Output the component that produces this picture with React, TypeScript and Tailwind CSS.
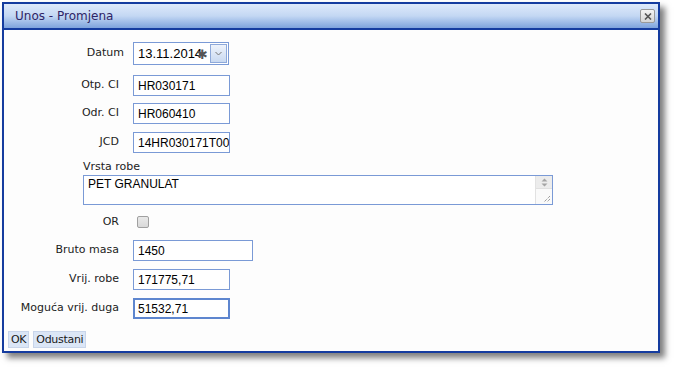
import React from "react";

const Label = ({ children, className = "" }: { children: React.ReactNode; className?: string }) => (
  <div className={"w-[115px] text-right text-[11px] text-[#222] " + className}>{children}</div>
);

const TextInput = ({ value, w = "w-[97px]", focus = false }: { value: string; w?: string; focus?: boolean }) => (
  <div
    className={
      "h-[21px] ml-[14px] bg-white overflow-hidden whitespace-nowrap flex items-center font-['Liberation_Sans',Arial,sans-serif] text-[12px] text-black " +
      w +
      (focus ? " border-2 border-[#5e86cf] pl-[3px]" : " border border-[#7a9ad6] pl-[4px]")
    }
  >
    {value}
  </div>
);

const App = () => {
  return (
    <div className="w-[674px] h-[367px] bg-white pt-[2px] pl-[2px] font-['DejaVu_Sans',Verdana,sans-serif]">
      <div className="w-[658px] h-[351px] border-2 border-[#153c9f] bg-[#fdfdfd] shadow-[5px_5px_6px_rgba(0,0,0,0.5)] flex flex-col">
        {/* title */}
        <div className="h-[26px] shrink-0 border-b-2 border-[#153c9f] bg-gradient-to-b from-[#dfeafa] via-[#c3d7f3] to-[#7ea3dc] flex items-center justify-between pl-[11px] pr-[3px]">
          <span className="text-[12px] text-[#2e2466]">Unos - Promjena</span>
          <div className="w-[15px] h-[14px] rounded-[2px] border border-[#9a9a9a] bg-gradient-to-b from-[#f4f4f4] to-[#d6d6d6] flex items-center justify-center">
            <svg width="8" height="7" viewBox="0 0 8 7">
              <path d="M1 0.5 L7 6.5 M7 0.5 L1 6.5" stroke="#555" strokeWidth="1.6" />
            </svg>
          </div>
        </div>

        {/* body */}
        <div className="flex-1 flex flex-col pt-[12px]">
          <div className="flex items-center h-[23px]">
            <Label className="w-[120px]">Datum</Label>
            <div className="ml-[9px] w-[96px] h-[23px] border border-[#7a9ad6] bg-white flex items-center relative">
              <span className="pl-[4px] font-['Liberation_Sans',Arial,sans-serif] text-[13px] text-black">13.11.2014</span>
              <span className="absolute left-[63px] top-[2px] text-[13px] text-[#555] font-['DejaVu_Sans',sans-serif]">✱</span>
              <div className="absolute right-[1px] top-[1px] w-[17px] h-[19px] border border-[#8ea9da] bg-gradient-to-b from-[#eef3fb] to-[#c9d9f1] flex items-center justify-center">
                <svg width="7" height="5" viewBox="0 0 7 5">
                  <path d="M0.5 1 L3.5 4 L6.5 1" stroke="#777" strokeWidth="1" fill="none" />
                </svg>
              </div>
            </div>
          </div>

          <div className="flex items-center mt-[10px]">
            <Label>Otp. CI</Label>
            <TextInput value="HR030171" />
          </div>
          <div className="flex items-center mt-[7px]">
            <Label>Odr. CI</Label>
            <TextInput value="HR060410" />
          </div>
          <div className="flex items-center mt-[8px]">
            <Label>JCD</Label>
            <TextInput value="14HR030171T00" />
          </div>

          <div className="ml-[79px] mt-[7px] w-[470px]">
            <div className="text-[11px] text-[#222] leading-[14px]">Vrsta robe</div>
            <div className="mt-[1px] h-[30px] border border-[#7a9ad6] bg-white flex">
              <div className="flex-1 pl-[4px] pt-[1px] font-['Liberation_Sans',Arial,sans-serif] text-[12px] leading-[14px] text-black">
                PET GRANULAT
              </div>
              <div className="w-[17px] flex flex-col border-l border-[#e2e2e2]">
                <div className="h-[12px] bg-[#ececec] flex items-center justify-center">
                  <svg width="7" height="9" viewBox="0 0 7 9">
                    <path d="M3.5 0.5 L6.5 3.5 H0.5 Z M3.5 8.5 L6.5 5.5 H0.5 Z" fill="#a5a5a5" />
                  </svg>
                </div>
                <div className="flex-1 flex items-end justify-end pr-[1px] pb-[1px] bg-[#fafafa] border-t border-[#e0e0e0]">
                  <svg width="8" height="8" viewBox="0 0 8 8">
                    <path d="M7 1 L1 7 M7 4 L4 7" stroke="#777" strokeWidth="1" strokeDasharray="1 1" />
                  </svg>
                </div>
              </div>
            </div>
          </div>

          <div className="flex items-center mt-[9px] h-[16px]">
            <Label>OR</Label>
            <div className="ml-[18px] w-[12px] h-[12px] rounded-[2px] border border-[#a0a0a0] bg-gradient-to-b from-[#e9e9e9] to-[#d9d9d9]" />
          </div>

          <div className="flex items-center mt-[10px]">
            <Label>Bruto masa</Label>
            <TextInput value="1450" w="w-[120px]" />
          </div>
          <div className="flex items-center mt-[8px]">
            <Label>Vrij. robe</Label>
            <TextInput value="171775,71" />
          </div>
          <div className="flex items-center mt-[8px]">
            <Label>Moguća vrij. duga</Label>
            <TextInput value="51532,71" focus />
          </div>

          <div className="flex gap-[4px] mt-[12px] pl-[4px]">
            <button className="h-[17px] px-[2px] bg-[#dbe6f6] border border-[#c8d5ea] text-[11px] tracking-[-0.3px] text-[#1a1a1a] leading-none">OK</button>
            <button className="h-[17px] px-[2px] bg-[#dbe6f6] border border-[#c8d5ea] text-[11px] tracking-[-0.3px] text-[#1a1a1a] leading-none">Odustani</button>
          </div>
        </div>
      </div>
    </div>
  );
};

export default App;
